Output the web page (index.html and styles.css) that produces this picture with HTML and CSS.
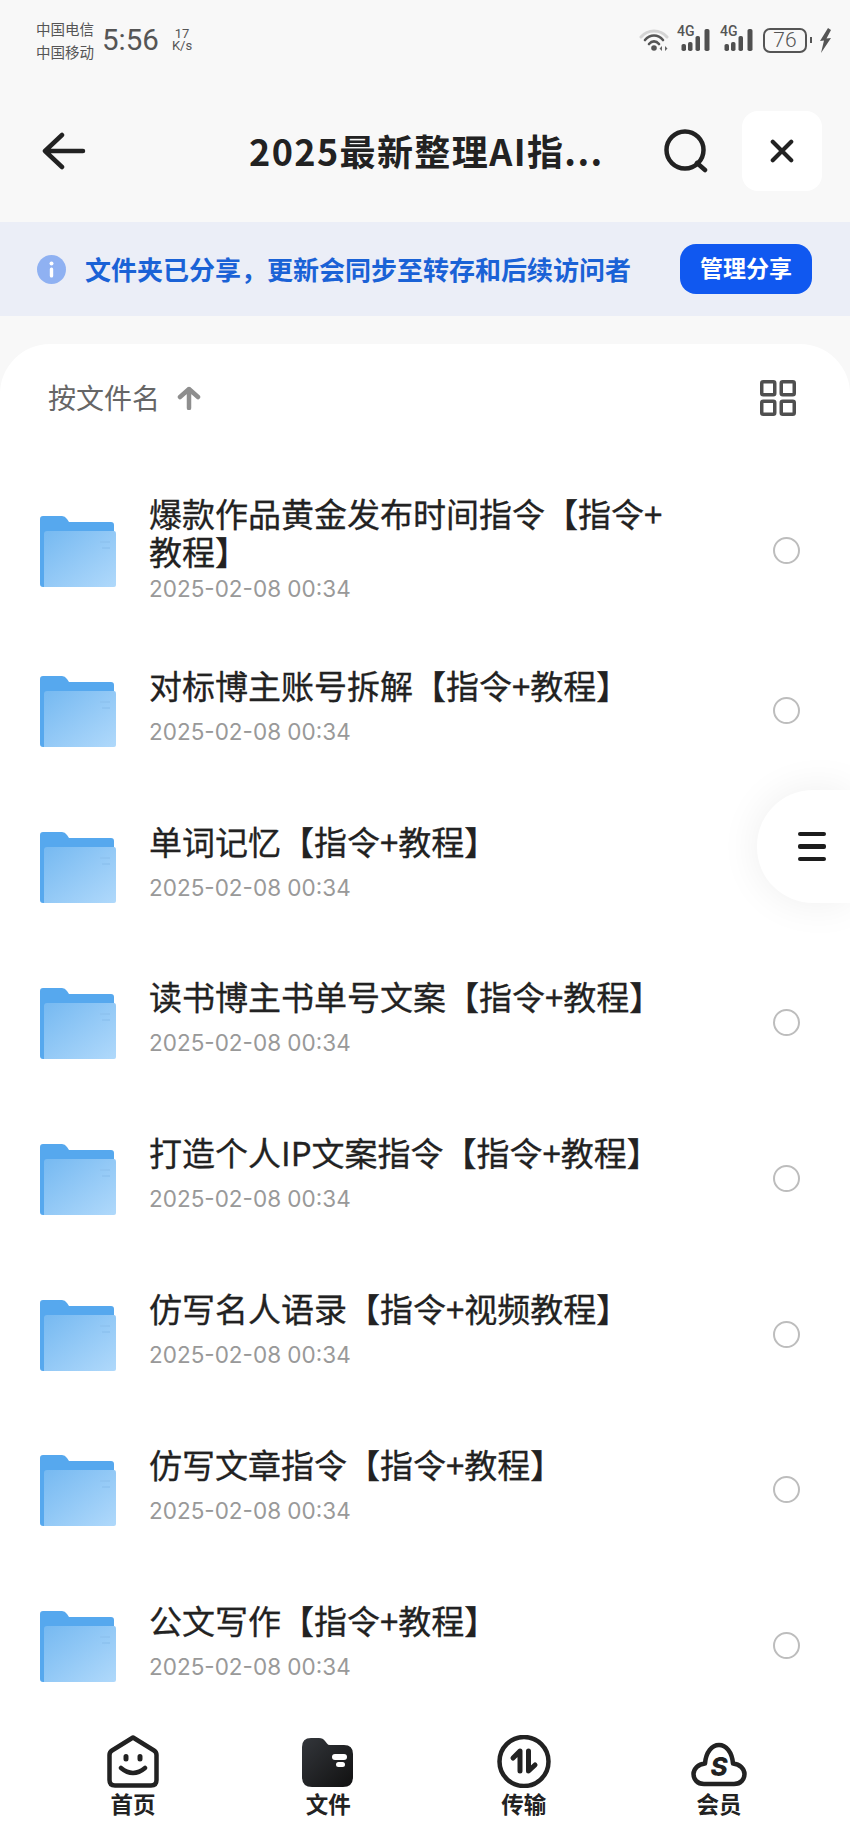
FILE: index.html
```html
<!DOCTYPE html>
<html lang="zh-CN">
<head>
    <meta charset="UTF-8">
    <meta name="viewport" content="width=device-width, initial-scale=1.0">
    <title>2025最新整理AI指令</title>
    <link rel="stylesheet" href="styles.css">
</head>
<body>
    <div class="phone">
        <div class="status-bar">
            <div class="carriers"><span>中国电信</span><span>中国移动</span></div>
            <div class="clock">5:56</div>
            <div class="speed"><span>17</span><span>K/s</span></div>
            <div class="status-icons">
                <svg class="wifi" width="32" height="24" viewBox="0 0 32 24" fill="none">
                    <path d="M2 9C9 1 21 1 28 9" stroke="#d4d4d4" stroke-width="3" stroke-linecap="round"/>
                    <path d="M6 12C11 6 19 6 24 12" stroke="#555" stroke-width="2.600" stroke-linecap="round"/>
                    <path d="M10 16C13 12.500 17 12.500 20 16" stroke="#555" stroke-width="2.600" stroke-linecap="round"/>
                    <circle cx="15" cy="20" r="2.800" fill="#555"/>
                    <path d="M23 18l-2.500 2.500 2.500 2.500zM26 18l2.500 2.500-2.500 2.500z" fill="#666"/>
                </svg>
                <div class="signal">
                    <span class="signal-label">4G</span>
                    <svg width="36" height="24" viewBox="0 0 36 24" fill="#4f4f4f">
                        <rect x="4.500" y="16" width="4.500" height="7" rx="1.800"/>
                        <rect x="11" y="14" width="4.500" height="9" rx="1.800"/>
                        <rect x="18.500" y="8" width="4.500" height="15" rx="1.800"/>
                        <rect x="27.500" y="1" width="5" height="22" rx="1.800"/>
                    </svg>
                </div>
                <div class="signal">
                    <span class="signal-label">4G</span>
                    <svg width="36" height="24" viewBox="0 0 36 24" fill="#4f4f4f">
                        <rect x="4.500" y="16" width="4.500" height="7" rx="1.800"/>
                        <rect x="11" y="14" width="4.500" height="9" rx="1.800"/>
                        <rect x="18.500" y="8" width="4.500" height="15" rx="1.800"/>
                        <rect x="27.500" y="1" width="5" height="22" rx="1.800"/>
                    </svg>
                </div>
                <div class="battery">76</div>
                <div class="battery-nub"></div>
                <svg width="13" height="25" viewBox="0 0 13 25" fill="#555">
                    <path d="M9 0L1 13l4 -.5L2 25l10-15-4.500.5L12 2z"/>
                </svg>
            </div>
        </div>

        <div class="nav">
            <svg class="back" width="44" height="38" viewBox="0 0 44 38" fill="none" stroke="#222" stroke-width="4.500" stroke-linecap="round" stroke-linejoin="round">
                <path d="M3 19H41M20 3L3 19L20 35"/>
            </svg>
            <div class="nav-title">2025最新整理AI指...</div>
            <svg class="search" width="44" height="44" viewBox="0 0 44 44" fill="none" stroke="#222" stroke-width="4.500" stroke-linecap="round">
                <circle cx="21" cy="21" r="18.500"/>
                <path d="M33 34L41 41"/>
            </svg>
            <div class="close-btn">
                <svg width="24" height="24" viewBox="0 0 26 26" fill="none" stroke="#222" stroke-width="4.500" stroke-linecap="round">
                    <path d="M3 3L23 23M23 3L3 23"/>
                </svg>
            </div>
        </div>

        <div class="share-banner">
            <svg width="29" height="29" viewBox="0 0 29 29">
                <circle cx="14.500" cy="14.500" r="14.500" fill="#8fb1f2"/>
                <circle cx="14.500" cy="8.500" r="2" fill="#fff"/>
                <rect x="12.800" y="12.500" width="3.400" height="10" rx="1.500" fill="#fff"/>
            </svg>
            <div class="share-text">文件夹已分享&#xFF0C;更新会同步至转存和后续访问者</div>
            <div class="share-btn">管理分享</div>
        </div>

        <div class="file-card">
            <div class="sort-bar">
                <span class="sort-label">按文件名</span>
                <svg class="sort-arrow" width="24" height="24" viewBox="0 0 24 24" fill="none" stroke="#8e8e8e" stroke-width="4.500" stroke-linecap="round" stroke-linejoin="round">
                    <path d="M12 22V3M3 11L12 3L21 11"/>
                </svg>
                <svg class="grid-icon" width="36" height="36" viewBox="0 0 36 36" fill="none" stroke="#4f4f4f" stroke-width="3.500">
                    <rect x="1.750" y="1.750" width="13" height="13" rx="1.500"/>
                    <rect x="21.250" y="1.750" width="13" height="13" rx="1.500"/>
                    <rect x="1.750" y="21.250" width="13" height="13" rx="1.500"/>
                    <rect x="21.250" y="21.250" width="13" height="13" rx="1.500"/>
                </svg>
            </div>

            <div class="file-list">
                <div class="file-row first">
                    <svg class="folder"><use href="#folder-icon"/></svg>
                    <div class="file-info">
                        <div class="file-name">爆款作品黄金发布时间指令【指令+<br>教程】</div>
                        <div class="file-date">2025-02-08 00:34</div>
                    </div>
                    <div class="radio"></div>
                </div>
                <div class="file-row">
                    <svg class="folder"><use href="#folder-icon"/></svg>
                    <div class="file-info">
                        <div class="file-name">对标博主账号拆解【指令+教程】</div>
                        <div class="file-date">2025-02-08 00:34</div>
                    </div>
                    <div class="radio"></div>
                </div>
                <div class="file-row">
                    <svg class="folder"><use href="#folder-icon"/></svg>
                    <div class="file-info">
                        <div class="file-name">单词记忆【指令+教程】</div>
                        <div class="file-date">2025-02-08 00:34</div>
                    </div>
                </div>
                <div class="file-row">
                    <svg class="folder"><use href="#folder-icon"/></svg>
                    <div class="file-info">
                        <div class="file-name">读书博主书单号文案【指令+教程】</div>
                        <div class="file-date">2025-02-08 00:34</div>
                    </div>
                    <div class="radio"></div>
                </div>
                <div class="file-row">
                    <svg class="folder"><use href="#folder-icon"/></svg>
                    <div class="file-info">
                        <div class="file-name">打造个人IP文案指令【指令+教程】</div>
                        <div class="file-date">2025-02-08 00:34</div>
                    </div>
                    <div class="radio"></div>
                </div>
                <div class="file-row">
                    <svg class="folder"><use href="#folder-icon"/></svg>
                    <div class="file-info">
                        <div class="file-name">仿写名人语录【指令+视频教程】</div>
                        <div class="file-date">2025-02-08 00:34</div>
                    </div>
                    <div class="radio"></div>
                </div>
                <div class="file-row">
                    <svg class="folder"><use href="#folder-icon"/></svg>
                    <div class="file-info">
                        <div class="file-name">仿写文章指令【指令+教程】</div>
                        <div class="file-date">2025-02-08 00:34</div>
                    </div>
                    <div class="radio"></div>
                </div>
                <div class="file-row">
                    <svg class="folder"><use href="#folder-icon"/></svg>
                    <div class="file-info">
                        <div class="file-name">公文写作【指令+教程】</div>
                        <div class="file-date">2025-02-08 00:34</div>
                    </div>
                    <div class="radio"></div>
                </div>
            </div>

            <div class="float-menu">
                <span></span><span></span><span></span>
            </div>

            <div class="tab-bar">
                <div class="tab">
                    <svg class="tab-icon" width="52" height="53" viewBox="0 0 52 53" fill="none" stroke="#222" stroke-width="4.500" stroke-linecap="round" stroke-linejoin="round">
                        <path d="M26 2.500L47 15.500Q49.500 17 49.500 20V45Q49.500 50.500 44 50.500H8Q2.500 50.500 2.500 45V20Q2.500 17 5 15.500Z"/>
                        <path d="M14 33Q26 43 38 33"/>
                        <path d="M19 21.500V24M33 21.500V24" stroke-width="5"/>
                    </svg>
                    <span class="tab-label">首页</span>
                </div>
                <div class="tab">
                    <svg class="tab-icon" width="52" height="53" viewBox="0 0 52 53">
                        <defs>
                            <linearGradient id="tab-folder-fill" x1="0" y1="0" x2="1" y2="1">
                                <stop offset="0" stop-color="#33363b"/>
                                <stop offset="1" stop-color="#111"/>
                            </linearGradient>
                        </defs>
                        <path d="M0 12Q0 3 9 3H17Q21 3 23 6L25 8.500Q26 10 28 10H42Q51 10 51 19V42Q51 52 41 52H10Q0 52 0 42Z" fill="url(#tab-folder-fill)"/>
                        <rect x="30" y="19" width="15" height="6" rx="3" fill="#fff"/>
                        <rect x="34" y="27" width="9" height="5" rx="2.500" fill="#fff"/>
                    </svg>
                    <span class="tab-label">文件</span>
                </div>
                <div class="tab">
                    <svg class="tab-icon" width="54" height="53" viewBox="0 0 54 53" fill="none" stroke="#222" stroke-width="4.500" stroke-linecap="round" stroke-linejoin="round">
                        <circle cx="27" cy="26.500" r="24.500"/>
                        <path d="M23 36V16L16 23" stroke-width="5"/>
                        <path d="M31.500 16V36L38 30" stroke-width="5"/>
                    </svg>
                    <span class="tab-label">传输</span>
                </div>
                <div class="tab">
                    <svg class="tab-icon" width="56" height="53" viewBox="0 0 56 53" fill="none" stroke="#222" stroke-width="4.500" stroke-linejoin="round">
                        <path d="M13 49H43C50 49 53.500 44 53.500 39C53.500 34 49 29 42 28.500C41 17 35 10 28 10C21 10 15 17 14 28.500C7 29 2.500 34 2.500 39C2.500 44 6 49 13 49Z"/>
                        <text class="cloud-letter" x="28" y="41" text-anchor="middle">S</text>
                    </svg>
                    <span class="tab-label">会员</span>
                </div>
            </div>
        </div>
    </div>

    <!-- shared folder artwork -->
    <svg class="defs" width="0" height="0">
        <defs>
            <linearGradient id="folder-front" x1="0" y1="0" x2="1" y2="1">
                <stop offset="0" stop-color="#76b9f1"/>
                <stop offset="1" stop-color="#b0d9fb"/>
            </linearGradient>
            <symbol id="folder-icon" viewBox="0 0 76 71">
                <path d="M0 3Q0 0 3 0H22Q25 0 27 3L29 6H71Q74 6 74 9V20H6V71H3Q0 71 0 68Z" fill="#56a8ee"/>
                <path d="M4 18Q4 15 7 15H74Q76 15 76 18V69Q76 71 74 71H4Z" fill="url(#folder-front)"/>
                <path d="M60 26H70M62 32H70" stroke="#8fc4f1" stroke-width="2"/>
            </symbol>
        </defs>
    </svg>
</body>
</html>
```

FILE: styles.css
```css
html, body {
    margin: 0;
    padding: 0;
    height: 100%;
    overflow: hidden;
}
body {
    font-family: "Noto Sans CJK SC", "Noto Sans", sans-serif;
    background: #f8f8f8;
    color: #222;
}
.defs {
    position: absolute;
}
.phone {
    display: flex;
    flex-direction: column;
    height: 1842px;
}

/* status bar */
.status-bar {
    display: flex;
    align-items: center;
    height: 80px;
    padding: 0 18px 0 36px;
    box-sizing: border-box;
    color: #555;
}
.carriers {
    display: flex;
    flex-direction: column;
    font-size: 14.500px;
    line-height: 23px;
}
.clock {
    font-family: Roboto, sans-serif;
    font-weight: 400;
    font-size: 29.500px;
    margin-left: 8px;
}
.speed {
    display: flex;
    flex-direction: column;
    align-items: center;
    font-family: Roboto, sans-serif;
    font-size: 13px;
    line-height: 12px;
    margin-left: 13px;
}
.status-icons {
    display: flex;
    align-items: center;
    margin-left: auto;
}
.wifi {
    margin-right: 6px;
}
.signal {
    position: relative;
    margin-right: 7px;
}
.signal svg {
    display: block;
}
.signal-label {
    position: absolute;
    left: 0;
    top: -4px;
    font-family: Roboto, sans-serif;
    font-size: 14px;
    font-weight: 500;
    line-height: 14px;
}
.battery {
    width: 44px;
    height: 25px;
    box-sizing: border-box;
    border: 2px solid #555;
    border-radius: 7px;
    font-family: Roboto, sans-serif;
    font-weight: 300;
    font-size: 21px;
    line-height: 21px;
    text-align: center;
}
.battery-nub {
    width: 2px;
    height: 6px;
    background: #555;
    margin: 0 7px 0 3px;
}

/* title bar */
.nav {
    display: flex;
    align-items: center;
    height: 142px;
    padding-left: 42px;
}
.nav-title {
    width: 360px;
    margin-left: 163px;
    padding-bottom: 2px;
    font-size: 36px;
    font-weight: 700;
    letter-spacing: 1.400px;
    white-space: nowrap;
}
.search {
    margin-left: 55px;
}
.close-btn {
    display: flex;
    align-items: center;
    justify-content: center;
    width: 80px;
    height: 80px;
    margin-left: 34px;
    background: #fff;
    border-radius: 16px;
}

/* share notice */
.share-banner {
    display: flex;
    align-items: center;
    height: 94px;
    padding: 0 38px 0 37px;
    background: #ebeef7;
}
.share-text {
    margin-left: 19px;
    padding-bottom: 2px;
    font-size: 26px;
    font-weight: 700;
    color: #1a62d6;
    white-space: nowrap;
}
.share-btn {
    margin-left: auto;
    width: 132px;
    height: 50px;
    line-height: 47px;
    text-align: center;
    border-radius: 16px;
    background: #1058f0;
    color: #fff;
    font-size: 23px;
    font-weight: 700;
}

/* file list */
.file-card {
    position: relative;
    flex: 1;
    display: flex;
    flex-direction: column;
    min-height: 0;
    margin-top: 28px;
    background: #fff;
    border-radius: 50px 50px 0 0;
    overflow: hidden;
}
.sort-bar {
    display: flex;
    align-items: center;
    flex: none;
    height: 108px;
    padding: 0 54px 0 48px;
}
.sort-label {
    padding-bottom: 2px;
    font-size: 28px;
    color: #666;
}
.sort-arrow {
    margin-left: 17px;
}
.grid-icon {
    margin-left: auto;
}
.file-list {
    flex: 1;
    min-height: 0;
    overflow: hidden;
}
.file-row {
    display: flex;
    align-items: center;
    height: 155.800px;
    padding: 0 50px 0 40px;
}
.file-row.first {
    box-sizing: border-box;
    height: 181px;
    padding-top: 44px;
    padding-bottom: 28px;
}
.folder {
    flex: none;
    width: 76px;
    height: 71px;
    margin-top: 2px;
}
.file-info {
    flex: 1;
    margin-left: 33px;
    padding-bottom: 9px;
}
.first .file-info {
    padding-bottom: 3px;
}
.file-name {
    width: 530px;
    font-size: 33px;
    line-height: 38px;
    color: #222;
    -webkit-text-stroke: 0.3px #222;
}
.file-date {
    margin-top: 13px;
    font-family: Inter, sans-serif;
    font-size: 22.500px;
    line-height: 30px;
    color: #999;
}
.first .file-date {
    margin-top: 4px;
}
.radio {
    flex: none;
    width: 27px;
    height: 27px;
    box-sizing: border-box;
    border: 2px solid #bdbdbd;
    border-radius: 50%;
}

/* side handle */
.float-menu {
    position: absolute;
    top: 446px;
    right: 0;
    display: flex;
    flex-direction: column;
    justify-content: center;
    gap: 8px;
    width: 93px;
    height: 113px;
    box-sizing: border-box;
    padding-left: 41px;
    background: #fff;
    border-radius: 56px 0 0 56px;
    box-shadow: 0 0 40px rgba(0, 0, 0, 0.07);
}
.float-menu span {
    display: block;
    width: 28px;
    height: 4.500px;
    border-radius: 2px;
    background: #1c1c1c;
}

/* bottom tabs */
.tab-bar {
    display: flex;
    flex: none;
    justify-content: space-between;
    height: 130px;
    padding: 0 104px 0 106px;
    box-sizing: border-box;
    background: #fff;
}
.tab {
    display: flex;
    flex-direction: column;
    align-items: center;
    width: 54px;
    padding-top: 23px;
}
.tab-icon {
    flex: none;
    display: block;
}
.tab-label {
    font-size: 22.500px;
    line-height: 30px;
    font-weight: 700;
    white-space: nowrap;
}
.cloud-letter {
    font-family: Inter, sans-serif;
    font-size: 26px;
    font-weight: 800;
    font-style: italic;
    fill: #222;
    stroke: none;
}
```
